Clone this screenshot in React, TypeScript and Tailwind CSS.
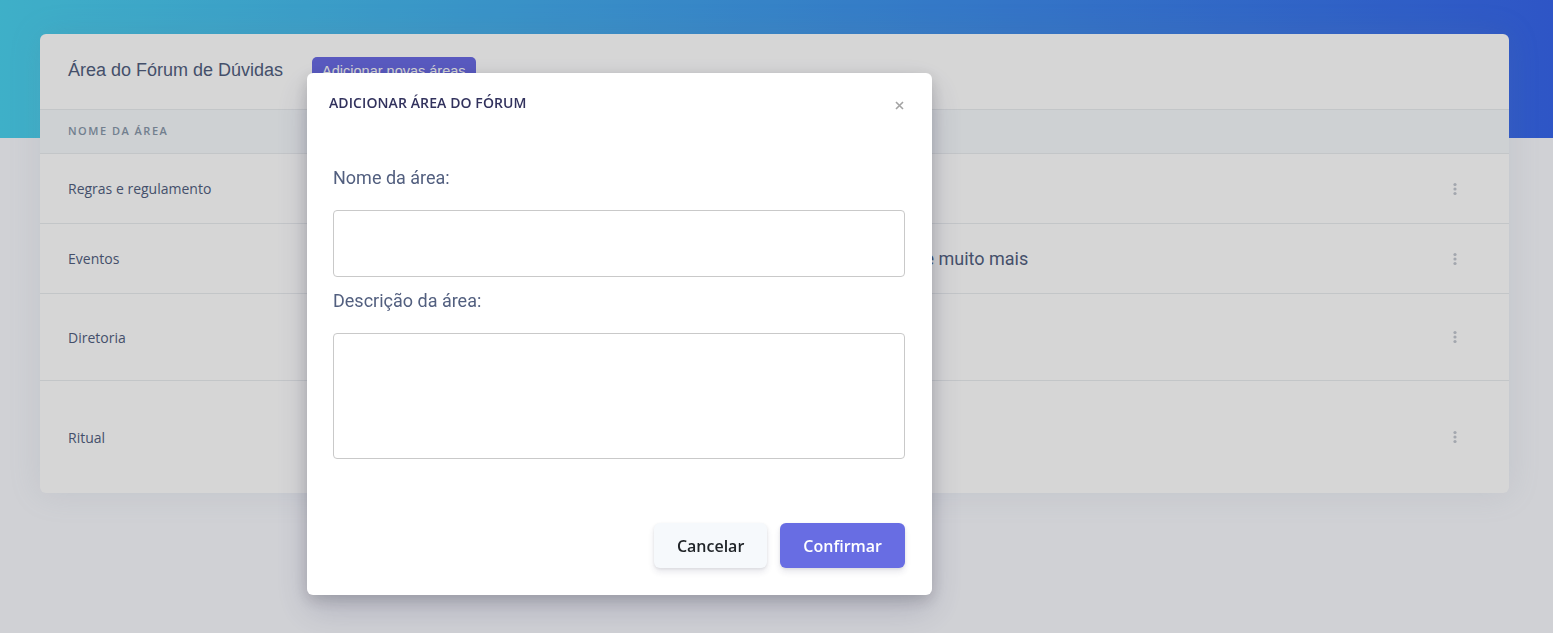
import * as React from 'react';

interface Area {
  nome: string;
  descricao: string;
  altura: string;
}

const areas: Area[] = [
  { nome: 'Regras e regulamento', descricao: 'Normas do fórum', altura: 'h-[70px]' },
  { nome: 'Eventos', descricao: 'Encontros, palestras e muito mais', altura: 'h-[70px]' },
  { nome: 'Diretoria', descricao: 'Assuntos da diretoria', altura: 'h-[87px]' },
  { nome: 'Ritual', descricao: 'Ritualística', altura: 'h-[112px]' },
];

function Kebab() {
  return (
    <svg width="4" height="14" viewBox="0 0 4 14" fill="#c3c7d0">
      <circle cx="2" cy="2.5" r="1.6" />
      <circle cx="2" cy="7" r="1.6" />
      <circle cx="2" cy="11.5" r="1.6" />
    </svg>
  );
}

function AreaRow({ area, last }: { area: Area; last: boolean }) {
  return (
    <div className={`flex items-center ${area.altura} ${last ? '' : 'border-b border-[#e9ecef]'}`}>
      <div className="w-[717px] pl-[28px] text-[14px] text-[#525f7f] font-['Open_Sans',sans-serif]">
        {area.nome}
      </div>
      <div className="flex-1 text-[18px] text-[#525f7f] font-['Roboto',sans-serif]">{area.descricao}</div>
      <div className="w-[108px] flex justify-center">
        <Kebab />
      </div>
    </div>
  );
}

function AddAreaModal() {
  return (
    <div className="fixed inset-0 bg-black/16">
      <div className="absolute left-[307px] top-[73px] w-[625px] rounded-[6px] bg-white shadow-[0_15px_35px_rgba(50,50,93,0.2),0_5px_15px_rgba(0,0,0,0.17)]">
        <div className="flex items-start justify-between pt-[20px] pl-[22px] pr-[28px]">
          <h6 className="text-[14px] leading-[20px] font-semibold tracking-[0.1px] text-[#32325d] font-['Open_Sans',sans-serif]">
            ADICIONAR ÁREA DO FÓRUM
          </h6>
          <button className="mt-[8px] text-[#a3a3a3]">
            <svg width="9" height="9" viewBox="0 0 9 9" stroke="currentColor" strokeWidth="1.6">
              <path d="M1 1l7 7M8 1l-7 7" />
            </svg>
          </button>
        </div>
        <div className="pl-[26px] pr-[27px] pb-[27px] font-['Roboto',sans-serif]">
          <label className="block mt-[51px] text-[18px] leading-[27px] text-[#525f7f]">Nome da área:</label>
          <input type="text" className="block mt-[19px] w-full h-[67px] rounded-[4px] border border-[#c9c9c9] outline-none" />
          <label className="block mt-[10px] text-[18px] leading-[27px] text-[#525f7f]">Descrição da área:</label>
          <textarea className="block mt-[19px] w-full h-[126px] rounded-[4px] border border-[#c9c9c9] outline-none resize-none" />
          <div className="flex justify-end gap-[13px] mt-[64px] font-['Open_Sans',sans-serif]">
            <button className="h-[45px] px-[23px] rounded-[6px] bg-[#f6f9fc] text-[16px] font-semibold text-[#212529] shadow-[0_4px_6px_rgba(50,50,93,0.11),0_1px_3px_rgba(0,0,0,0.08)]">
              Cancelar
            </button>
            <button className="h-[45px] px-[23px] rounded-[6px] bg-[#686de3] text-[16px] font-semibold text-white shadow-[0_4px_6px_rgba(50,50,93,0.11),0_1px_3px_rgba(0,0,0,0.08)]">
              Confirmar
            </button>
          </div>
        </div>
      </div>
    </div>
  );
}

export default function App() {
  return (
    <div className="relative h-[633px] overflow-hidden bg-[#f8f9fe]">
      <div className="h-[138px] bg-[linear-gradient(87deg,#4bd2ef,#3766ec)]" />
      <div className="-mt-[104px] ml-10 mr-[44px]">
        <div className="rounded-[6px] bg-white shadow-[0_0_32px_rgba(136,152,170,0.15)]">
          <div className="flex items-center h-[75px] px-[28px] gap-[29px]">
            <h3 className="-mt-[2px] text-[18px] text-[#525f7f] font-['Liberation_Sans',sans-serif]">Área do Fórum de Dúvidas</h3>
            <button className="h-[29px] px-[10px] rounded-[5px] bg-[#6a6be4] text-white text-[14.5px] font-['Liberation_Sans',sans-serif]">
              Adicionar novas áreas
            </button>
          </div>
          <div className="flex items-center h-[45px] bg-[#f6f9fc] border-y border-[#e9ecef] pl-[28px]">
            <span className="text-[11px] font-semibold uppercase tracking-[1.5px] text-[#8898aa] font-['Open_Sans',sans-serif]">
              Nome da área
            </span>
          </div>
          {areas.map((area, i) => (
            <AreaRow key={area.nome} area={area} last={i === areas.length - 1} />
          ))}
        </div>
      </div>
      <AddAreaModal />
    </div>
  );
}
